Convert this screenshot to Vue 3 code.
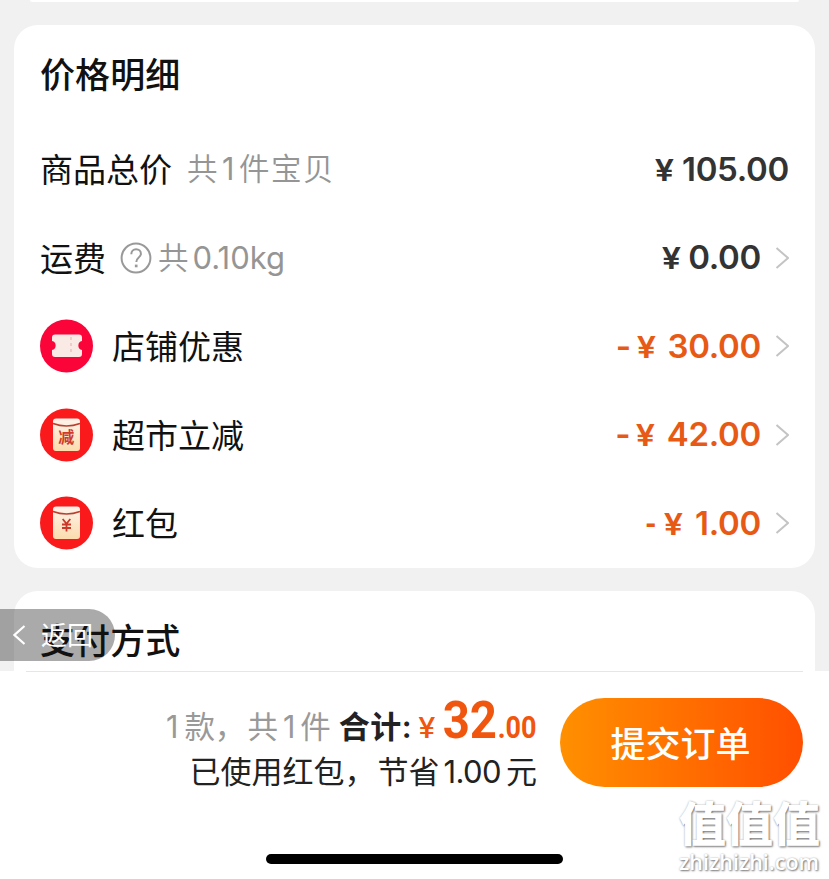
<script setup>
import { ref } from 'vue'

const discounts = ref([
	{ id: 1, icon: 'coupon', name: '店铺优惠', price: '30.00' },
	{ id: 2, icon: 'minus', name: '超市立减', price: '42.00' },
	{ id: 3, icon: 'packet', name: '红包', price: '1.00' },
])
</script>

<template>
	<div class="page">
		<div class="content">
			<div class="card-prev"></div>

			<div class="card">
				<h2 class="title">价格明细</h2>
				<div class="row">
					<span class="name">商品总价</span>
					<span class="sub goods">共<i>1</i>件宝贝</span>
					<span class="price total"><span class="yen">¥</span>105.00</span>
				</div>
				<div class="row">
					<span class="name">运费</span>
					<svg class="help" width="32" height="32" viewBox="0 0 32 32" fill="none" stroke="#999" stroke-width="2">
						<circle cx="16" cy="16" r="14.4" />
						<path d="M11.300 12.200c0-2.800 1.900-4.900 4.800-4.900s4.800 1.900 4.800 4.400c0 2.100-1.200 3.200-2.600 4.300-1.400 1.200-2 2-2 4" />
						<path d="M16.200 22.600v2.700" stroke-width="2.700" />
					</svg>
					<span class="sub weight">共<b>0.10kg</b></span>
					<span class="price"><span class="yen">¥</span>0.00</span>
					<svg class="arrow" width="14" height="22" viewBox="0 0 14 22"><path d="M1.500 1l11.500 10L1.500 21" /></svg>
				</div>
				<div v-for="item in discounts" :key="item.id" class="row">
					<svg class="icon" width="54" height="54" viewBox="0 0 54 54">
						<defs>
							<linearGradient id="cream" x1="0" y1="0" x2="0" y2="1">
								<stop offset="0" stop-color="#fff3ea" />
								<stop offset="1" stop-color="#fbdcae" />
							</linearGradient>
						</defs>
						<template v-if="item.icon === 'coupon'">
							<circle cx="26.500" cy="27" r="26.500" fill="#fb0439" />
							<path
								fill="#faeae5"
								d="M15 15.500h24q3 0 3 3v3.500a4.600 4.600 0 0 0 0 9v4q0 3-3 3H15q-3 0-3-3v-4a4.600 4.600 0 0 0 0-9v-3.500q0-3 3-3z"
							/>
							<path d="M31 18v18" stroke="#f1cbc6" stroke-width="2" stroke-dasharray="3 3" />
						</template>
						<template v-else>
							<circle cx="26.500" cy="27" r="26.500" fill="#fa1a1c" />
							<rect x="13" y="10.500" width="27" height="32.500" rx="3" fill="url(#cream)" />
							<path d="M13 15.500q13.500 5 27 0" fill="none" stroke="#b8402f" stroke-width="1.400" />
							<text v-if="item.icon === 'minus'" class="glyph" x="26.200" y="34.700" font-size="16">减</text>
							<path v-else d="M22.700 23l3.800 4.800 3.800-4.800M26.500 27.500v8M22 28.500h9M22 32h9" fill="none" stroke="#c93a2a" stroke-width="1.800" />
						</template>
					</svg>
					<span class="name">{{ item.name }}</span>
					<span class="price off" :class="{ short: item.price.length < 5 }"><span class="dash">-</span><span class="yen">¥</span>{{ item.price }}</span>
					<svg class="arrow" width="14" height="22" viewBox="0 0 14 22"><path d="M1.500 1l11.500 10L1.500 21" /></svg>
				</div>
			</div>

			<div class="card">
				<h2 class="title pay">支付方式</h2>
			</div>

			<div class="back">
				<svg width="13" height="20" viewBox="0 0 13 20" fill="none" stroke="#fff" stroke-width="2.200"><path d="M11.500 1L1.500 10l10 9" /></svg>
				<span>返回</span>
			</div>
		</div>

		<div class="footer">
			<div class="submit-bar">
				<div class="summary">
					<div class="line1">
						<span class="count"><i>1</i>款，<span class="pieces">共<i>1</i>件</span></span>
						<span class="label">合计:</span>
						<span class="sum-yen">¥</span>
						<span class="sum">32</span>
						<span class="cents">.00</span>
					</div>
					<div class="line2">已使用红包，<span>节省<i>1.00</i>元</span></div>
				</div>
				<button class="submit">提交订单</button>
			</div>
			<div class="home"></div>
			<div class="watermark">
				<div class="mark">值值值</div>
				<div class="site">zhizhizhi.com</div>
			</div>
		</div>
	</div>
</template>

<style>
body {
	margin: 0;
}
</style>

<style scoped>
.page {
	width: 829px;
	height: 879px;
	overflow: hidden;
	background: #fff;
	color: #111;
	font-family: Inter, 'Noto Sans CJK SC', sans-serif;
}

i,
b {
	font-style: normal;
	font-weight: inherit;
}

.content {
	position: relative;
	height: 671px;
	overflow: hidden;
	background: #f1f1f1;
}

.card-prev {
	height: 2px;
	margin: 0 30px 23px;
	background: #fff;
	border-radius: 0 0 8px 8px;
}

.card {
	margin: 0 14px 23px;
	padding: 0 26px;
	height: 543px;
	box-sizing: border-box;
	background: #fff;
	border-radius: 24px;
}

.title {
	margin: 0;
	height: 100px;
	line-height: 96px;
	font-family: 'Noto Sans CJK SC', sans-serif;
	font-size: 35px;
	font-weight: 500;
	letter-spacing: 0.100px;
}

.row {
	display: flex;
	align-items: center;
	height: 88.500px;
	white-space: nowrap;
}

.name {
	padding-bottom: 2px;
	font-family: 'Noto Sans CJK SC', sans-serif;
	font-size: 33px;
	line-height: 44px;
}

.sub {
	padding-bottom: 2px;
	font-family: 'Noto Sans CJK SC', sans-serif;
	font-weight: 350;
	font-size: 30.500px;
	line-height: 44px;
	color: #959595;
}

.sub i,
.sub b {
	font-family: Inter, sans-serif;
	font-weight: 400;
}

.goods {
	margin-left: 15px;
	letter-spacing: 1.500px;
}

.goods i {
	margin: 0 3px 0 3px;
}

.help {
	margin: 0 6px 0 14px;
}

.weight b {
	margin-left: 4px;
	font-size: 31px;
}

.price {
	margin-left: auto;
	font-size: 33px;
	font-weight: 570;
	line-height: 44px;
	letter-spacing: -0.300px;
	color: #333;
}

.yen {
	display: inline-block;
	margin-right: 9px;
	font-size: 30px;
	transform: scaleX(1.140);
}

.off {
	color: #e75a16;
}

.off .yen {
	margin-right: 13px;
}

.dash {
	display: inline-block;
	margin-right: 7px;
}

.short .dash {
	transform: scaleX(0.750);
}

.arrow {
	margin-left: 14px;
	fill: none;
	stroke: #c4c4c4;
	stroke-width: 2;
}

.icon {
	margin-right: 18px;
}

.glyph {
	font-family: 'Noto Sans CJK SC', sans-serif;
	font-weight: 700;
	fill: #cf3a2a;
	text-anchor: middle;
}

/* floating pill that returns to the previous app */
.back {
	position: absolute;
	left: 0;
	top: 609px;
	width: 115px;
	height: 52px;
	padding-left: 13px;
	box-sizing: border-box;
	display: flex;
	align-items: center;
	gap: 15px;
	border-radius: 0 26px 26px 0;
	background: rgba(20, 20, 20, 0.360);
	color: #fff;
	font-family: 'Noto Sans CJK SC', sans-serif;
	font-size: 26px;
	line-height: 48px;
	white-space: nowrap;
}

.back span {
	padding-bottom: 3px;
}

.footer {
	position: relative;
	height: 208px;
}

.submit-bar {
	display: flex;
	justify-content: flex-end;
	margin: 0 26px;
	padding-top: 26px;
	border-top: 1px solid #e6e6e6;
}

.summary {
	display: flex;
	flex-direction: column;
	align-items: flex-end;
	margin-right: 23px;
	white-space: nowrap;
}

.line1 {
	display: flex;
	align-items: baseline;
	height: 50px;
	line-height: 46px;
}

.count {
	font-size: 30.500px;
	color: #999;
}

.count > i {
	margin-right: 6px;
}

.pieces {
	margin-left: 2px;
}

.pieces i {
	margin: 0 5px;
}

.label {
	margin-left: 8px;
	font-size: 31px;
	font-weight: 600;
	letter-spacing: 0.500px;
	color: #222;
}

.sum-yen {
	margin-left: 7px;
	font-size: 28px;
	font-weight: 500;
	color: #f0560d;
	transform: scaleX(1.100);
}

.sum {
	margin: 0 -4px 0 5px;
	font-family: Roboto, sans-serif;
	font-size: 52px;
	font-weight: 700;
	color: #f0560d;
	transform: scaleX(0.910);
}

.cents {
	margin-left: -3px;
	font-family: Roboto, sans-serif;
	font-size: 31px;
	font-weight: 700;
	color: #f0560d;
	transform: scaleX(0.870);
	transform-origin: right;
}

.line2 {
	font-size: 31px;
	line-height: 48px;
	color: #222;
}

.line2 span {
	margin-left: 2px;
}

.line2 i {
	margin: 0 5px 0 4px;
	letter-spacing: -0.600px;
}

.submit {
	width: 243px;
	height: 89px;
	padding: 0 2px 3px 0;
	border: none;
	border-radius: 45px;
	background: linear-gradient(90deg, #ff9000, #ff4f00);
	color: #fff;
	font-family: 'Noto Sans CJK SC', sans-serif;
	font-size: 35px;
	font-weight: 500;
}

.home {
	position: absolute;
	left: 266px;
	bottom: 15px;
	width: 297px;
	height: 10px;
	border-radius: 5px;
	background: #000;
}

.watermark {
	position: absolute;
	right: 8px;
	bottom: 5px;
	width: 142px;
	color: #fff;
	text-shadow: 1px 1px 2px #777, 0 0 2px #bbb;
	white-space: nowrap;
}

.mark {
	margin-bottom: 4px;
	font-family: 'Noto Sans CJK SC', sans-serif;
	font-size: 47px;
	font-weight: 900;
	line-height: 50px;
}

.site {
	font-family: 'Open Sans', sans-serif;
	font-size: 21.500px;
	font-weight: 600;
	line-height: 24px;
}
</style>
